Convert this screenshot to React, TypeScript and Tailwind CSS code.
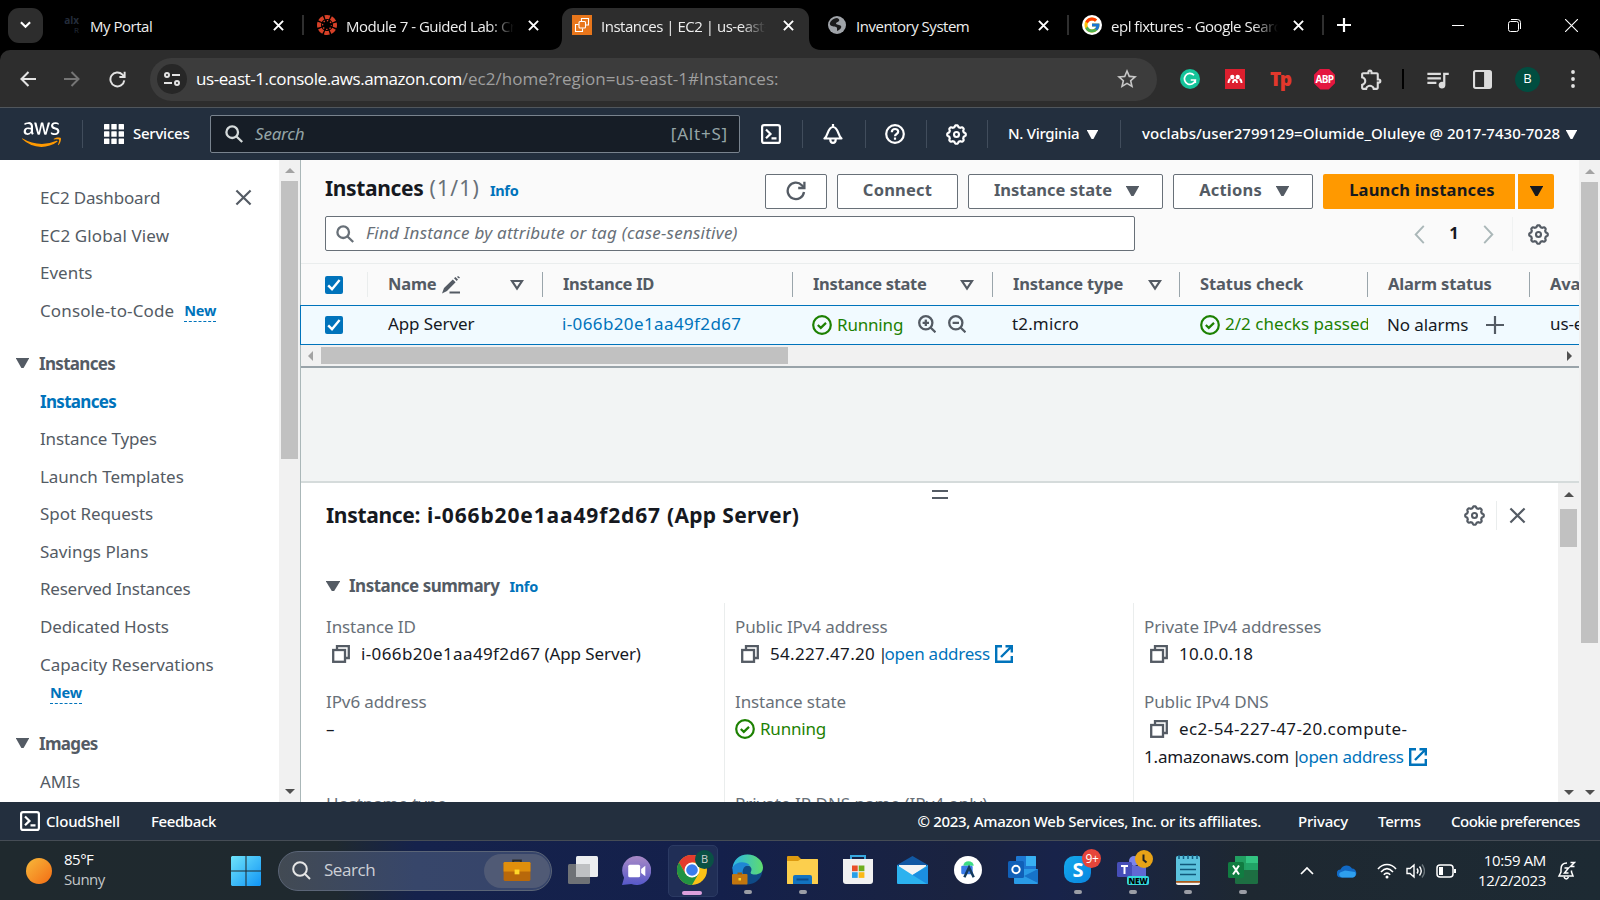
import type { ReactNode } from "react";
import { FaAws } from "react-icons/fa";
import { FcGoogle } from "react-icons/fc";
import { MdOutlineExtension, MdQueueMusic, MdStarBorder } from "react-icons/md";

/* ---------- shared glyphs ---------- */

const gearPath = (() => {
  const pts: string[] = [];
  for (let i = 0; i < 96; i++) {
    const a = (i / 96) * Math.PI * 2;
    const r = 6.4 + 0.65 * Math.max(-1, Math.min(1, 1.5 * Math.cos(8 * a)));
    pts.push(`${(8 + r * Math.cos(a)).toFixed(2)} ${(8 + r * Math.sin(a)).toFixed(2)}`);
  }
  return `M${pts.join("L")}Z`;
})();

const Gear = ({ className = "" }: { className?: string }) => (
  <svg viewBox="0 0 16 16" className={`size-[21px] shrink-0 ${className}`} fill="none" stroke="currentColor">
    <path d={gearPath} strokeWidth="1.7" strokeLinejoin="round" />
    <circle cx="8" cy="8" r="1.9" strokeWidth="1.6" />
  </svg>
);

const Close = ({ className = "" }: { className?: string }) => (
  <svg viewBox="0 0 18 18" className={`shrink-0 ${className}`} fill="none" stroke="currentColor">
    <path d="M1.5 1.5l15 15M16.5 1.5l-15 15" strokeWidth="2.3" />
  </svg>
);

const Caret = ({ className = "" }: { className?: string }) => (
  <svg viewBox="0 0 12 10" preserveAspectRatio="none" className={`shrink-0 ${className}`} fill="currentColor">
    <path d="M0 0h12v.5L7 10H5L0 .5z" />
  </svg>
);

const SortCaret = () => (
  <svg viewBox="0 0 14 12" className="h-[12px] w-[14px] shrink-0" fill="none" stroke="#545b64" strokeWidth="2.2">
    <path d="M2 2h10L7 9.6z" />
  </svg>
);

const Magnifier = ({ className = "" }: { className?: string }) => (
  <svg viewBox="0 0 18 18" className={`size-[18px] shrink-0 ${className}`} fill="none" stroke="currentColor" strokeWidth="2.3">
    <circle cx="7.2" cy="7.2" r="5.8" />
    <path d="M11.5 11.5l5.7 5.5" />
  </svg>
);

const Terminal = ({ className = "" }: { className?: string }) => (
  <svg viewBox="0 0 20 20" className={`size-[20px] shrink-0 ${className}`} fill="none" stroke="currentColor" strokeWidth="2.2">
    <rect x="1.1" y="1.1" width="17.8" height="17.8" rx="2" />
    <path d="M5 5.5l4.5 4.4L5 14.3M10.5 14.4h5" />
  </svg>
);

const Reload = ({ className = "" }: { className?: string }) => (
  <svg viewBox="0 0 20 20" className={`shrink-0 ${className}`} fill="none" stroke="currentColor" strokeWidth="2.3">
    <path d="M18 11a8.2 8.2 0 1 1-2.2-6.8L18 6.4" />
    <path d="M18.4 0.8v6.2h-6.2" />
  </svg>
);

const StatusOk = () => (
  <svg viewBox="0 0 20 20" className="size-[20px] shrink-0" fill="none" stroke="#1d8102" strokeWidth="2.2">
    <circle cx="10" cy="10" r="8.8" />
    <path d="M5.8 10l3 2.9 5.2-5" />
  </svg>
);

const CopyIcon = () => (
  <svg viewBox="0 0 18 18" className="size-[18px] shrink-0" fill="none" stroke="#545b64" strokeWidth="2.3">
    <rect x="1.2" y="5" width="11.8" height="11.8" />
    <path d="M5 5V1.2h11.8V13H13" />
  </svg>
);

const ExternalIcon = () => (
  <svg viewBox="0 0 18 18" className="size-[18px] shrink-0" fill="none" stroke="#0073bb" strokeWidth="2.4">
    <path d="M7 1.2H1.2v15.6h15.6V11" />
    <path d="M10.5 1.2h6.3v6.3M16.5 1.5L6 12" />
  </svg>
);

const Zoomer = ({ plus }: { plus?: boolean }) => (
  <svg viewBox="0 0 18 18" className="size-[18px] shrink-0" fill="none" stroke="#545b64" strokeWidth="2.3">
    <circle cx="7.8" cy="7.8" r="6.6" />
    <path d="M12.5 12.5l5 4.8M4.6 7.8h6.4" />
    {plus && <path d="M7.8 4.6v6.4" />}
  </svg>
);

const Checkbox = () => (
  <span className="flex size-[18px] shrink-0 items-center justify-center rounded-[2px] bg-[#0073bb]">
    <svg viewBox="0 0 14 14" className="size-[14px]" fill="none" stroke="#fff" strokeWidth="2.4">
      <path d="M1.2 7.4l3.8 3.8L12.6 2" />
    </svg>
  </span>
);

const Arrow = ({ dir, dim }: { dir: "up" | "down" | "left" | "right"; dim?: boolean }) => {
  const d = { up: "M0 7L5 2l5 5z", down: "M0 3l5 5 5-5z", left: "M7 0L2 5l5 5z", right: "M3 0l5 5-5 5z" }[dir];
  return (
    <svg viewBox="0 0 10 10" className="size-[10px] shrink-0" fill={dim ? "#a3a3a3" : "#505050"}>
      <path d={d} />
    </svg>
  );
};

/* ---------- browser chrome ---------- */

const TabClose = () => (
  <svg viewBox="0 0 12 12" className="size-[11px] shrink-0" stroke="#fff" strokeWidth="2.1">
    <path d="M1 1l10 10M11 1L1 11" />
  </svg>
);

const tabText = "mt-[2px] overflow-hidden whitespace-nowrap text-[15px] leading-[24px] tracking-[-0.480px] text-[#eeeeee]";
const fade = "[mask-image:linear-gradient(to_right,#000_85%,transparent)]";

function TabStrip() {
  return (
    <div className="flex h-[50px] items-center bg-black font-['Open_Sans',sans-serif]">
      <div className="ml-[8px] flex size-[35px] shrink-0 items-center justify-center rounded-[11px] bg-[#2d2d2d]">
        <svg viewBox="0 0 12 8" className="h-[8px] w-[11px]" fill="none" stroke="#fff" strokeWidth="2.3">
          <path d="M1 1l5 5 5-5" />
        </svg>
      </div>
      <div className="ml-[19px] flex w-[17px] shrink-0 flex-col items-end text-[10px] leading-[9px] font-bold text-[#232c3a]">
        <span>alx</span>
        <span className="text-[8px] font-normal">R</span>
      </div>
      <span className={`ml-[11px] w-[183px] shrink-0 ${tabText}`}>My Portal</span>
      <TabClose />
      <span className="ml-[18px] h-[20px] w-[2px] shrink-0 bg-[#2f2f2f]" />
      <svg viewBox="0 0 20 20" className="ml-[13px] size-[20px] shrink-0" fill="none">
        <circle cx="10" cy="10" r="8" stroke="#d64027" strokeWidth="4" strokeDasharray="4.9 1.383" strokeDashoffset="2.4" />
        <circle cx="10" cy="10" r="4.4" stroke="#d64027" strokeWidth="1.4" strokeDasharray="1.4 2.056" strokeDashoffset="0.7" />
      </svg>
      <span className={`ml-[9px] w-[168px] shrink-0 tracking-[-0.400px] ${tabText} ${fade}`}>Module 7 - Guided Lab: Creating</span>
      <span className="ml-[14px] flex">
        <TabClose />
      </span>
      <div className="ml-[11px] flex h-[50px] w-[271px] shrink-0 items-end">
        <svg viewBox="0 0 12 12" className="size-[12px] shrink-0" fill="#2d2d2d">
          <path d="M12 0v12H0C8 12 12 7 12 0z" />
        </svg>
        <div className="flex h-[42px] w-[247px] shrink-0 items-center rounded-t-[11px] bg-[#2d2d2d] pb-[8px]">
          <svg viewBox="0 0 20 20" className="ml-[10px] size-[20px] shrink-0" fill="none" stroke="#fff" strokeWidth="1.1">
            <rect width="20" height="20" fill="#e8761b" stroke="none" />
            <rect x="7" y="6.5" width="6.5" height="6.5" rx="1" />
            <path d="M9.5 6V3.5h7V10H14M6.5 9.5H3.5v7h7V13.5" />
          </svg>
          <span className={`ml-[9px] w-[165px] shrink-0 ${tabText} ${fade}`}>Instances | EC2 | us-east-1</span>
          <span className="ml-[17px] flex">
            <TabClose />
          </span>
        </div>
        <svg viewBox="0 0 12 12" className="size-[12px] shrink-0" fill="#2d2d2d">
          <path d="M0 0v12h12C4 12 0 7 0 0z" />
        </svg>
      </div>
      <svg viewBox="0 0 18 18" className="ml-[7px] size-[18px] shrink-0">
        <circle cx="9" cy="9" r="9" fill="#a0a4a9" />
        <path d="M9 2c1.500.5 3 1.500 2 3S8 6 8 7.500 12 8.500 13 10s-1 4-4 5c0-2 .5-3.500-1-4S3 10.500 2 8.500 5 2 9 2z" fill="#1b1b1b" />
      </svg>
      <span className={`ml-[10px] w-[182px] shrink-0 ${tabText}`}>Inventory System</span>
      <TabClose />
      <span className="ml-[18px] h-[20px] w-[2px] shrink-0 bg-[#2f2f2f]" />
      <span className="ml-[13px] flex size-[20px] shrink-0 items-center justify-center rounded-full bg-white">
        <FcGoogle className="size-[18px]" />
      </span>
      <span className={`ml-[9px] w-[167px] shrink-0 ${tabText} ${fade}`}>epl fixtures - Google Search</span>
      <span className="ml-[15px] flex">
        <TabClose />
      </span>
      <span className="ml-[18px] h-[20px] w-[2px] shrink-0 bg-[#2f2f2f]" />
      <svg viewBox="0 0 14 14" className="ml-[13px] size-[14px] shrink-0" stroke="#fff" strokeWidth="2.2">
        <path d="M7 0v14M0 7h14" />
      </svg>
      <div className="ml-auto flex items-center gap-[44px] pr-[22px] text-white">
        <span className="h-[1px] w-[12px] bg-white" />
        <svg viewBox="0 0 13 13" className="size-[13px]" fill="none" stroke="#fff" strokeWidth="1">
          <rect x="0.5" y="2.5" width="10" height="10" rx="2" />
          <path d="M3 .5h6.5a3 3 0 0 1 3 3V10" />
        </svg>
        <svg viewBox="0 0 13 13" className="size-[13px]" stroke="#fff" strokeWidth="1.1">
          <path d="M0 0l13 13M13 0L0 13" />
        </svg>
      </div>
    </div>
  );
}

function AddressBar() {
  return (
    <div className="bg-black font-['Open_Sans',sans-serif]">
      <div className="flex h-[57px] items-center rounded-t-[10px] bg-[#2d2d2d] pt-[1px]">
        <svg viewBox="0 0 16 16" className="ml-[20px] size-[16px] shrink-0" fill="none" stroke="#e3e3e3" strokeWidth="2.1">
          <path d="M16 8H2M8.5 1L1.500 8l7 7" />
        </svg>
        <svg viewBox="0 0 16 16" className="ml-[28px] size-[16px] shrink-0" fill="none" stroke="#757575" strokeWidth="2">
          <path d="M0 8h14M7.5 1l7 7-7 7" />
        </svg>
        <Reload className="ml-[29px] size-[17px] text-[#e3e3e3]" />
        <div className="ml-[24px] flex h-[43px] w-[1007px] shrink-0 items-center rounded-full bg-[#3c3c3c]">
          <div className="ml-[7px] flex size-[30px] items-center justify-center rounded-full bg-[#272727]">
            <svg viewBox="0 0 16 14" className="h-[14px] w-[16px]" fill="none" stroke="#e3e3e3" strokeWidth="2">
              <circle cx="3" cy="3" r="2" />
              <path d="M8 3h8M0 11h8" />
              <circle cx="13" cy="11" r="2" />
            </svg>
          </div>
          <span className="ml-[9px] text-[17px] tracking-[-0.420px] whitespace-nowrap text-white">
            us-east-1.console.aws.amazon.com
            <span className="tracking-[0.010px] text-[#9f9f9f]">/ec2/home?region=us-east-1#Instances:</span>
          </span>
          <MdStarBorder className="mr-[18px] ml-auto size-[24px] text-[#c7c7c7]" />
        </div>
        <svg viewBox="0 0 20 20" className="ml-[23px] size-[20px] shrink-0" fill="none" stroke="#fff" strokeWidth="1.7">
          <circle cx="10" cy="10" r="10" fill="#15c39a" stroke="none" />
          <path d="M14 6.2A5.5 5.5 0 1 0 15.300 11h-4.600M15.300 11v3" />
        </svg>
        <svg viewBox="0 0 20 20" className="ml-[25px] size-[20px] shrink-0">
          <rect width="20" height="20" fill="#dc1f2e" />
          <path d="M3.500 14c0-2.500.8-3.500 2-4M16.500 14c0-2.500-.8-3.500-2-4M8 14c0-2 .5-3 2-3s2 1 2 3" stroke="#fff" strokeWidth="1.9" fill="none" />
          <circle cx="7.3" cy="8" r="2.2" fill="#fff" />
          <circle cx="12.7" cy="8" r="2.2" fill="#fff" />
        </svg>
        <span className="ml-[25px] w-[20px] shrink-0 text-[19px] leading-[20px] font-extrabold tracking-[-1.500px] text-[#e2382c]">Tp</span>
        <span className="ml-[24px] flex size-[21px] shrink-0 items-center justify-center bg-[#e4173f] text-[10px] font-bold tracking-[-0.600px] text-white [clip-path:polygon(30%_0,70%_0,100%_30%,100%_70%,70%_100%,30%_100%,0_70%,0_30%)]">
          ABP
        </span>
        <MdOutlineExtension className="ml-[24px] size-[25px] shrink-0 text-[#dcdcdc]" />
        <span className="ml-[18px] h-[20px] w-[2px] shrink-0 bg-black" />
        <MdQueueMusic className="ml-[20px] size-[27px] shrink-0 text-[#dcdcdc]" />
        <svg viewBox="0 0 18 18" className="ml-[22px] size-[19px] shrink-0" fill="none" stroke="#dcdcdc" strokeWidth="2">
          <rect x="1" y="1" width="16" height="16" rx="1.5" />
          <path d="M10.500 1h6.500v16h-6.500z" fill="#dcdcdc" stroke="none" />
        </svg>
        <span className="ml-[23px] flex size-[25px] shrink-0 items-center justify-center rounded-full bg-[#014d40] text-[13px] text-white">B</span>
        <svg viewBox="0 0 4 18" className="ml-[31px] h-[18px] w-[4px] shrink-0" fill="#e3e3e3">
          <circle cx="2" cy="2" r="1.9" />
          <circle cx="2" cy="9" r="1.9" />
          <circle cx="2" cy="16" r="1.9" />
        </svg>
      </div>
    </div>
  );
}

/* ---------- AWS top navigation ---------- */

const NavDivider = ({ className = "" }: { className?: string }) => (
  <span className={`h-[28px] w-[1px] shrink-0 bg-[#414d5c] ${className}`} />
);

function AwsNav() {
  return (
    <div className="flex h-[53px] items-center border-t border-[#50565c] bg-[#232f3e] text-white">
      <svg width="0" height="0" className="absolute">
        <linearGradient id="aws" x1="0" x2="0" y1="0" y2="1">
          <stop offset="0.6" stopColor="#fff" />
          <stop offset="0.6" stopColor="#f90" />
        </linearGradient>
      </svg>
      <FaAws className="ml-[22px] h-[33px] w-[39px] shrink-0" fill="url(#aws)" preserveAspectRatio="none" />
      <NavDivider className="ml-[21px]" />
      <svg viewBox="0 0 20 20" className="ml-[21px] size-[20px] shrink-0" fill="#fff">
        {[0, 7.3, 14.6].map((y) => [0, 7.3, 14.6].map((x) => <rect key={`${x}-${y}`} x={x} y={y} width="5.4" height="5.4" rx=".5" />))}
      </svg>
      <span className="ml-[9px] w-[57px] shrink-0 pb-[1px] text-[15px] font-medium tracking-[-0.250px]">Services</span>
      <div className="ml-[20px] flex h-[38px] w-[530px] shrink-0 items-center rounded-[2px] border border-[#79838e] bg-[#161d26] px-[14px]">
        <Magnifier className="text-[#d5dbdb]" />
        <span className="ml-[12px] text-[17px] tracking-[-0.200px] text-[#95a5a6] italic">Search</span>
        <span className="-mr-[3px] ml-auto text-[17px] tracking-[0.800px] text-[#95a5a6]">[Alt+S]</span>
      </div>
      <Terminal className="ml-[21px]" />
      <NavDivider className="ml-[21px]" />
      <svg viewBox="0 0 20 20" className="ml-[20px] size-[20px] shrink-0" fill="none" stroke="#fff" strokeWidth="2.2" strokeLinejoin="round">
        <path d="M1.500 14.500h17C15 12.500 15.500 3 10 3S5 12.500 1.500 14.500zM10 0v3M7.300 15.500c0 4.500 5.400 4.500 5.400 0" />
      </svg>
      <NavDivider className="ml-[22px]" />
      <svg viewBox="0 0 20 20" className="ml-[19px] size-[20px] shrink-0" fill="none" stroke="#fff" strokeWidth="2.2">
        <circle cx="10" cy="10" r="8.8" />
        <path d="M6.800 8.200C6.800 4 13.200 4 13.200 7.800c0 2.400-3.200 2-3.200 4.400M10 13.600v2.200" />
      </svg>
      <NavDivider className="ml-[21px]" />
      <Gear className="ml-[19px]" />
      <NavDivider className="ml-[20px]" />
      <span className="ml-[20px] w-[72px] shrink-0 pb-[1px] text-[15px] font-medium tracking-[-0.300px] whitespace-nowrap">N. Virginia</span>
      <Caret className="ml-[7px] h-[9px] w-[11px]" />
      <NavDivider className="ml-[22px]" />
      <span className="ml-[21px] w-[418px] shrink-0 pb-[1px] text-[15px] font-medium tracking-[0.050px] whitespace-nowrap">
        voclabs/user2799129=Olumide_Oluleye @ 2017-7430-7028
      </span>
      <Caret className="ml-[6px] h-[9px] w-[11px]" />
    </div>
  );
}

/* ---------- sidebar ---------- */

const NewTag = ({ className = "" }: { className?: string }) => (
  <span className={`h-[23px] border-b border-dashed border-[#0073bb] text-[14.500px] leading-[22px] font-bold tracking-[-0.200px] text-[#0073bb] ${className}`}>New</span>
);

const Item = ({ children, className = "" }: { children: ReactNode; className?: string }) => (
  <div className={`flex h-[37.550px] shrink-0 items-center pl-[40px] whitespace-nowrap ${className}`}>{children}</div>
);

const Section = ({ children }: { children: ReactNode }) => (
  <div className="flex h-[37.500px] shrink-0 items-center pb-[1px] pl-[16px] font-bold tracking-[-0.680px]">
    <Caret className="mr-[10px] h-[10px] w-[13px]" />
    {children}
  </div>
);

function Sidebar() {
  return (
    <div className="flex h-[642px] w-[301px] shrink-0 border-r border-[#aab7b8] bg-white">
      <div className="flex w-[279px] shrink-0 flex-col overflow-hidden pt-[19px] text-[17px] text-[#545b64]">
        <div className="flex items-center">
          <Item className="tracking-[-0.160px]">EC2 Dashboard</Item>
          <Close className="mr-[27px] ml-auto size-[17px]" />
        </div>
        <Item className="tracking-[0.120px]">EC2 Global View</Item>
        <Item>Events</Item>
        <Item className="tracking-[0.120px]">
          Console-to-Code
          <NewTag className="ml-[10px]" />
        </Item>
        <div className="h-[16px] shrink-0" />
        <Section>Instances</Section>
        <Item>
          <span className="font-bold tracking-[-0.680px] text-[#0073bb]">Instances</span>
        </Item>
        <Item className="tracking-[-0.140px]">Instance Types</Item>
        <Item className="tracking-[-0.050px]">Launch Templates</Item>
        <Item className="tracking-[-0.050px]">Spot Requests</Item>
        <Item>Savings Plans</Item>
        <Item className="tracking-[-0.230px]">Reserved Instances</Item>
        <Item className="tracking-[-0.110px]">Dedicated Hosts</Item>
        <Item className="tracking-[-0.050px]">Capacity Reservations</Item>
        <div className="flex h-[22px] shrink-0 pl-[50px]">
          <NewTag className="-mt-[2px]" />
        </div>
        <div className="h-[20px] shrink-0" />
        <Section>Images</Section>
        <Item>AMIs</Item>
      </div>
      <div className="flex w-[21px] flex-col items-center bg-[#f1f1f1] pt-[6px] pb-[6px]">
        <Arrow dir="up" dim />
        <div className="mt-[5px] h-[278px] w-[17px] bg-[#c1c1c1]" />
        <span className="mt-auto flex">
          <Arrow dir="down" />
        </span>
      </div>
    </div>
  );
}

/* ---------- instances table ---------- */

const Btn = ({ className, children }: { className: string; children: ReactNode }) => (
  <div className={`flex h-[35px] shrink-0 items-center justify-center rounded-[2px] border border-[#687078] bg-white pb-[1px] ${className}`}>{children}</div>
);

const Th = ({ className, children, first }: { className: string; children?: ReactNode; first?: boolean }) => (
  <div className={`flex h-[25px] shrink-0 items-center border-r whitespace-nowrap ${first ? "border-[#eaeded]" : "border-[#9aa5ab]"} ${className}`}>{children}</div>
);

const Td = ({ className, children }: { className: string; children?: ReactNode }) => (
  <div className={`flex shrink-0 items-center overflow-hidden whitespace-nowrap ${className}`}>{children}</div>
);

function InstancesTable() {
  return (
    <div className="flex flex-col bg-[#fafafa]">
      <div className="flex h-[56px] items-center pt-[6px] pl-[24px] text-[16.500px] font-bold tracking-[0.200px] text-[#545b64]">
        <div className="flex w-[440px] shrink-0 items-baseline pb-[4px]">
          <span className="text-[21px] tracking-[-0.350px] text-[#16191f]">Instances</span>
          <span className="ml-[6px] text-[21px] font-normal tracking-[1.200px] text-[#687078]">(1/1)</span>
          <span className="ml-[10px] text-[14.500px] tracking-[-0.300px] text-[#0073bb]">Info</span>
        </div>
        <Btn className="w-[62px]">
          <Reload className="size-[20px]" />
        </Btn>
        <Btn className="ml-[10px] w-[121px]">Connect</Btn>
        <Btn className="ml-[10px] w-[195px] pl-[2px] tracking-[0px]">
          Instance state
          <Caret className="ml-[14px] h-[10px] w-[13px]" />
        </Btn>
        <Btn className="ml-[10px] w-[140px] pl-[2px]">
          Actions
          <Caret className="ml-[14px] h-[10px] w-[13px]" />
        </Btn>
        <div className="ml-[10px] flex h-[35px] w-[192px] shrink-0 items-center justify-center rounded-l-[2px] bg-[#ff9900] pb-[1px] pl-[6px] text-[#16191f]">Launch instances</div>
        <div className="ml-[3px] flex h-[35px] w-[36px] shrink-0 items-center justify-center rounded-r-[2px] bg-[#ff9900] pb-[1px] text-[#16191f]">
          <Caret className="h-[10px] w-[13px]" />
        </div>
      </div>
      <div className="flex h-[47px] items-start pl-[24px]">
        <div className="flex h-[35px] w-[810px] shrink-0 items-center rounded-[2px] border border-[#687078] bg-white pl-[10px]">
          <Magnifier className="text-[#687078]" />
          <span className="ml-[12px] pb-[1px] text-[17px] tracking-[0.240px] text-[#687078] italic">Find Instance by attribute or tag (case-sensitive)</span>
        </div>
        <div className="flex h-[36px] items-center">
          <svg viewBox="0 0 11 20" className="ml-[279px] h-[19px] w-[11px]" fill="none" stroke="#aab7b8" strokeWidth="2">
            <path d="M10 1L1.500 10 10 19" />
          </svg>
          <span className="w-[58px] pb-[1px] text-center text-[16.500px] font-bold text-[#16191f]">1</span>
          <svg viewBox="0 0 11 20" className="h-[19px] w-[11px]" fill="none" stroke="#aab7b8" strokeWidth="2">
            <path d="M1 1l8.500 9L1 19" />
          </svg>
          <span className="ml-[18px] h-[34px] w-[1px] bg-[#f0f2f2]" />
          <Gear className="ml-[15px] text-[#545b64]" />
        </div>
      </div>
      <div className="flex h-[42px] items-center overflow-hidden border-t border-[#eaeded] pl-[24px] text-[16.500px] font-bold tracking-[-0.200px] text-[#545b64]">
        <Th className="w-[43px]" first>
          <Checkbox />
        </Th>
        <Th className="w-[175px] pl-[20px]">
          <span className="w-[54px] pb-[1px]">Name</span>
          <svg viewBox="0 0 18 18" className="size-[18px]" fill="#545b64">
            <path d="M0 17.500l2-5.500 8.800-8.600 2.800 2.800L5 15zM12 2.200L13.400 1 16 3.500l-1.300 1.400zM16 0l2 1.500-1 1-2-1.500zM7.500 15.500H18v2H7.500z" />
          </svg>
          <span className="ml-[50px]">
            <SortCaret />
          </span>
        </Th>
        <Th className="w-[250px] pl-[20px] tracking-[-0.300px]">Instance ID</Th>
        <Th className="w-[200px] pl-[20px] tracking-[-0.340px]">
          <span className="w-[147px]">Instance state</span>
          <SortCaret />
        </Th>
        <Th className="w-[187px] pl-[20px]">
          <span className="w-[135px]">Instance type</span>
          <SortCaret />
        </Th>
        <Th className="w-[188px] pl-[20px] tracking-[-0.100px]">Status check</Th>
        <Th className="w-[162px] pl-[20px] tracking-[-0.150px]">Alarm status</Th>
        <div className="pl-[20px] whitespace-nowrap">Ava</div>
      </div>
      <div className="-ml-px flex h-[40px] items-center overflow-hidden border-y border-l border-[#0073bb] bg-[#f1faff] pl-[24px] text-[17px] tracking-[-0.100px] text-[#16191f]">
        <Td className="w-[43px]">
          <Checkbox />
        </Td>
        <Td className="w-[175px] pb-[2px] pl-[20px]">App Server</Td>
        <Td className="w-[250px] pb-[2px] pl-[19px]">
          <span className="tracking-[0.380px] text-[#0073bb]">i-066b20e1aa49f2d67</span>
        </Td>
        <Td className="w-[200px] pl-[19px]">
          <StatusOk />
          <span className="ml-[5px] w-[81px] tracking-[-0.180px] text-[#1d8102]">Running</span>
          <span className="pb-[2px]">
            <Zoomer plus />
          </span>
          <span className="ml-[12px] pb-[2px]">
            <Zoomer />
          </span>
        </Td>
        <Td className="w-[187px] pb-[2px] pl-[19px]">
          <span className="tracking-[0.150px]">t2.micro</span>
        </Td>
        <Td className="w-[188px] pl-[20px]">
          <StatusOk />
          <span className="ml-[5px] pb-[2px] tracking-[0.030px] text-[#1d8102]">2/2 checks passed</span>
        </Td>
        <Td className="w-[162px] pl-[19px]">
          <span className="w-[99px]">No alarms</span>
          <svg viewBox="0 0 18 18" className="size-[18px]" stroke="#545b64" strokeWidth="2.2">
            <path d="M9 0v18M0 9h18" />
          </svg>
        </Td>
        <div className="pb-[2px] pl-[20px] whitespace-nowrap">us-east-1a</div>
      </div>
      <div className="flex h-[23px] items-center border-b-2 border-[#99a3a9] bg-[#f1f1f1] pl-[5px]">
        <Arrow dir="left" dim />
        <div className="ml-[5px] h-[17px] w-[467px] bg-[#c1c1c1]" />
        <span className="mr-[5px] ml-auto">
          <Arrow dir="right" />
        </span>
      </div>
    </div>
  );
}

/* ---------- split panel ---------- */

const label = "h-[27px] leading-[27px] text-[#687078] tracking-[-0.100px] whitespace-nowrap";
const value = "flex h-[28px] items-center whitespace-nowrap";

const OpenAddress = () => (
  <>
    <span className="tracking-[-3px]">|</span>
    <span className="mr-[5px] tracking-[-0.240px] text-[#0073bb]">open address</span>
    <ExternalIcon />
  </>
);

const Copy = () => (
  <span className="mr-[11px] ml-[6px]">
    <CopyIcon />
  </span>
);

function SplitPanel() {
  return (
    <div className="flex h-[321px] overflow-hidden border-t-2 border-[#d5dbdb] bg-white">
      <div className="flex w-[1257px] shrink-0 flex-col pl-[25px]">
        <div className="flex h-[16px] shrink-0 items-end pl-[606px]">
          <span className="h-[9px] w-[16px] border-y-2 border-[#545b64]" />
        </div>
        <div className="flex h-[33px] shrink-0 items-center">
          <span className="flex text-[21px] font-bold whitespace-nowrap text-[#16191f]">
            <span className="tracking-[-0.320px]">Instance:</span>
            <span className="ml-[7px] tracking-[0.860px]">i-066b20e1aa49f2d67</span>
            <span className="ml-[6px] tracking-[0.330px]">(App Server)</span>
          </span>
          <Gear className="ml-auto text-[#545b64]" />
          <span className="ml-[11px] h-[29px] w-[1px] bg-[#eaeded]" />
          <Close className="mr-[32px] ml-[12px] size-[17px] text-[#545b64]" />
        </div>
        <div className="mt-[42px] flex h-[24px] shrink-0 items-center text-[#545b64]">
          <Caret className="h-[10px] w-[14px]" />
          <span className="ml-[9px] text-[17px] font-bold tracking-[-0.500px]">Instance summary</span>
          <span className="ml-[10px] pt-[1px] text-[14.500px] font-bold tracking-[-0.300px] text-[#0073bb]">Info</span>
        </div>
        <div className="mt-[5px] flex text-[17px] tracking-[-0.100px] text-[#16191f]">
          <div className="w-[398px] shrink-0 pt-[10px]">
            <div className={label}>Instance ID</div>
            <div className={value}>
              <Copy />
              <span className="mr-[4px] tracking-[0.380px]">i-066b20e1aa49f2d67</span>
              <span>(App Server)</span>
            </div>
            <div className={`mt-[20px] ${label}`}>IPv6 address</div>
            <div className={value}>–</div>
            <div className={`mt-[47px] ${label}`}>Hostname type</div>
          </div>
          <div className="w-[409px] shrink-0 border-l border-[#eaeded] pt-[10px] pl-[10px]">
            <div className={label}>Public IPv4 address</div>
            <div className={value}>
              <Copy />
              <span className="mr-[3px] tracking-[0.330px]">54.227.47.20</span>
              <OpenAddress />
            </div>
            <div className={`mt-[20px] ${label}`}>Instance state</div>
            <div className={value}>
              <StatusOk />
              <span className="ml-[5px] tracking-[-0.200px] text-[#1d8102]">Running</span>
            </div>
            <div className={`mt-[47px] tracking-[0px] ${label}`}>Private IP DNS name (IPv4 only)</div>
          </div>
          <div className="shrink-0 border-l border-[#eaeded] pt-[10px] pl-[10px]">
            <div className={label}>Private IPv4 addresses</div>
            <div className={value}>
              <Copy />
              <span className="tracking-[0.250px]">10.0.0.18</span>
            </div>
            <div className={`mt-[20px] ${label}`}>Public IPv4 DNS</div>
            <div className={value}>
              <Copy />
              <span className="tracking-[0.420px]">ec2-54-227-47-20.compute-</span>
            </div>
            <div className={value}>
              <span className="mr-[3px] tracking-[-0.200px]">1.amazonaws.com</span>
              <OpenAddress />
            </div>
          </div>
        </div>
      </div>
      <div className="flex w-[21px] flex-col items-center bg-[#f1f1f1] pt-[7px] pb-[5px]">
        <Arrow dir="up" />
        <div className="mt-[9px] h-[38px] w-[17px] bg-[#c1c1c1]" />
        <span className="mt-auto flex">
          <Arrow dir="down" />
        </span>
      </div>
    </div>
  );
}

/* ---------- footer and taskbar ---------- */

function Footer() {
  return (
    <div className="flex h-[39px] shrink-0 items-center border-b border-[#454c55] bg-[#232f3e] text-[15px] font-medium tracking-[-0.200px] whitespace-nowrap text-white">
      <Terminal className="ml-[20px]" />
      <span className="ml-[6px] w-[105px]">CloudShell</span>
      <span className="tracking-[-0.400px]">Feedback</span>
      <span className="mr-[37px] ml-auto tracking-[-0.300px]">© 2023, Amazon Web Services, Inc. or its affiliates.</span>
      <span className="w-[80px]">Privacy</span>
      <span className="w-[73px]">Terms</span>
      <span className="w-[129px] tracking-[-0.520px]">Cookie preferences</span>
      <span className="w-[20px]" />
    </div>
  );
}

const TaskbarApp = ({ className = "", children, dot }: { className?: string; children: ReactNode; dot?: boolean }) => (
  <div className={`flex h-[59px] w-[55.050px] shrink-0 flex-col items-center ${className}`}>
    <div className="flex h-[48px] shrink-0 items-end justify-center pt-[8px]">{children}</div>
    {dot && <span className="mt-[1px] h-[4px] w-[8px] rounded-full bg-[#9b9ea6]" />}
  </div>
);

function Taskbar() {
  return (
    <div className="flex h-[59px] shrink-0 items-center bg-[linear-gradient(to_right,#1f292e_0%,#1f292f_21%,#15224c_26%,#14204b_45%,#1a2340_60%,#18234a_66%,#1e2831_78%,#1d2a33_100%)] font-['Open_Sans',sans-serif]">
      <span className="ml-[26px] size-[26px] shrink-0 rounded-full bg-linear-to-br from-[#f6b93a] to-[#f26a12]" />
      <div className="ml-[12px] flex w-[167px] shrink-0 flex-col pb-[3px] text-[15px] leading-[20px] tracking-[-0.500px] text-white">
        <span>85°F</span>
        <span className="text-[#c3c7c9]">Sunny</span>
      </div>
      <svg viewBox="0 0 29 29" className="size-[30px] shrink-0">
        <linearGradient id="win" x1="0" y1="0" x2="1" y2="1" gradientUnits="objectBoundingBox">
          <stop offset="0" stopColor="#6fe4fb" />
          <stop offset="1" stopColor="#1094f5" />
        </linearGradient>
        <path fill="url(#win)" d="M1 0h13v14H0V1zM15 0h13l1 1v13H15zM0 15h14v14H1l-1-1zM15 15h14v13l-1 1H15z" />
      </svg>
      <div className="ml-[17px] flex h-[40px] w-[274px] shrink-0 items-center rounded-full border border-[#5b6577] bg-linear-to-r from-[#424a53] via-[#37466a] to-[#36446a]">
        <svg viewBox="0 0 19 19" className="ml-[13px] size-[19px]" fill="none" stroke="#e6e6e6" strokeWidth="2">
          <circle cx="8" cy="8" r="6.8" />
          <path d="M13 13l5 5" />
        </svg>
        <span className="ml-[13px] pb-[1px] text-[17px] tracking-[-0.450px] text-[#cdd0d6]">Search</span>
        <div className="mr-[1px] ml-auto flex h-[34px] w-[66px] items-center justify-center rounded-full bg-[#505a75]">
          <svg viewBox="0 0 28 24" className="h-[23px] w-[28px]">
            <path d="M10 5V1.500h8V5" fill="none" stroke="#2a2a2a" strokeWidth="2" />
            <rect y="3" width="28" height="20" rx="1.5" fill="#b8680a" />
            <path d="M0 4.500Q0 3 1.500 3h25Q28 3 28 4.500V13H0z" fill="#e08f0c" />
            <rect x="11.5" y="11" width="5" height="5" fill="#ffd829" />
          </svg>
        </div>
      </div>
      <TaskbarApp className="ml-[3px]">
        <svg viewBox="0 0 30 28" className="mb-[5px] h-[28px] w-[30px]">
          <rect x="8" width="22" height="21" rx="1.5" fill="#eceef0" />
          <rect y="8" width="22" height="20" rx="1.5" fill="#6f7276" />
          <path d="M8 8h14v13H8z" fill="#bfc1c3" />
        </svg>
      </TaskbarApp>
      <TaskbarApp className="-ml-[1px]">
        <svg viewBox="0 0 28 28" className="mb-[4px] size-[29px]">
          <linearGradient id="meet" x1="0" y1="0" x2="0" y2="1">
            <stop offset="0" stopColor="#a889c6" />
            <stop offset="1" stopColor="#5658c9" />
          </linearGradient>
          <path d="M14 0a14 14 0 1 1-5 27L0 28l2-7A14 14 0 0 1 14 0z" fill="url(#meet)" />
          <rect x="6" y="8.5" width="11.5" height="12" rx="1.5" fill="#fff" />
          <path d="M18.500 12.500l4-3v10l-4-3z" fill="#fff" />
        </svg>
      </TaskbarApp>
      <div className="relative ml-[4px] flex h-[52px] w-[50px] shrink-0 flex-col items-center rounded-[5px] border border-[#2b3a63] bg-[#202e56] pr-[2px]">
        <svg viewBox="0 0 48 48" className="mt-[9px] size-[30px]">
          <circle cx="24" cy="24" r="24" fill="#fbc116" />
          <path d="M24 12h20.800A24 24 0 0 0 3.200 12L13.600 30z" fill="#e33b2e" />
          <path d="M3.200 12A24 24 0 0 0 24 48l10.400-18-10.400 6-10.400-6z" fill="#229342" />
          <circle cx="24" cy="24" r="12" fill="#fff" />
          <circle cx="24" cy="24" r="9.3" fill="#3b7ded" />
        </svg>
        <span className="absolute top-[4px] right-[3px] flex size-[19px] items-center justify-center rounded-full bg-[#0a5145] text-[11px] text-[#d0d0d0]">B</span>
        <span className="mt-[6px] h-[4px] w-[20px] shrink-0 rounded-full bg-[#dda0dd]" />
      </div>
      <TaskbarApp className="ml-[2px]" dot>
        <svg viewBox="0 0 31 30" className="mb-[4px] h-[31px] w-[31px]">
          <linearGradient id="edge" x1="0" y1="0" x2="1" y2="0">
            <stop offset="0" stopColor="#2bb5e6" />
            <stop offset="1" stopColor="#5fdc6e" />
          </linearGradient>
          <circle cx="15.5" cy="15" r="15" fill="#0f4a86" />
          <path d="M.5 14C1 6 7 0 15.500 0S31 6 31 13c0 5-4 7-8 7s-5-1-4-3c1.500-3-.5-6-4-6-6 0-8 5-14.500 3z" fill="url(#edge)" />
          <path d="M.5 13C5 6 14 7 18 11c-7-1-9 6-6 12L1 20z" fill="#1f86d4" />
          <rect x="0" y="19.5" width="15.5" height="10.5" rx="1" fill="#c2760f" />
          <rect x="5.5" y="18" width="4.5" height="2" fill="#9b5b0a" />
          <rect x="6.5" y="23.5" width="2.5" height="2.5" fill="#ffd829" />
        </svg>
      </TaskbarApp>
      <TaskbarApp dot>
        <svg viewBox="0 0 31 28" className="mb-[5px] h-[28px] w-[31px]">
          <path d="M0 1q0-1 1-1h10l3 3h16q1 0 1 1v24H0z" fill="#dd9a10" />
          <path d="M0 5h11l3-2h16q1 0 1 1v23q0 1-1 1H1q-1 0-1-1z" fill="#fccf4d" />
          <path d="M6 28v-7q0-2 2-2h15q2 0 2 2v7z" fill="#1273c0" />
          <path d="M9.500 23.500h12" stroke="#0a4c8c" strokeWidth="2" />
        </svg>
      </TaskbarApp>
      <TaskbarApp>
        <svg viewBox="0 0 30 30" className="mb-[4px] size-[30px]">
          <path d="M8 5V1h14v4" fill="none" stroke="#38a8de" strokeWidth="2" />
          <path d="M0 4h30v22q0 3-3 3H3q-3 0-3-3z" fill="#f1f1f1" />
          <path d="M9 10.500h5.700v5.700H9z" fill="#e8502a" />
          <path d="M15.700 10.500h5.700v5.700h-5.700z" fill="#6fae1f" />
          <path d="M9 17.200h5.700v5.700H9z" fill="#2aa0e8" />
          <path d="M15.700 17.200h5.700v5.700h-5.700z" fill="#fbb916" />
        </svg>
      </TaskbarApp>
      <TaskbarApp>
        <svg viewBox="0 0 31 28" className="mb-[5px] h-[28px] w-[31px]">
          <path d="M0 9L15.500 0 31 9v4H0z" fill="#1158a3" />
          <path d="M2 9h27v8L15.500 20 2 17z" fill="#f4f4f4" />
          <path d="M0 9l15.500 10L31 9v18q0 1-1 1H1q-1 0-1-1z" fill="#2cb2ef" />
          <path d="M31 10v17q0 1-1 1L15.500 19z" fill="#1b8fe0" />
        </svg>
      </TaskbarApp>
      <TaskbarApp>
        <svg viewBox="0 0 27 27" className="mb-[5px] size-[28px]">
          <circle cx="13.5" cy="13.5" r="13.5" fill="#fff" />
          <path d="M9 9.500a5 4.500 0 0 1 10 0z" fill="#3ddc84" />
          <rect x="7" y="9.5" width="11" height="8" rx="1" fill="#3a7be8" />
          <path d="M10 20.500L14.500 11l4.500 9.500" fill="none" stroke="#143a5c" strokeWidth="2.4" />
        </svg>
      </TaskbarApp>
      <TaskbarApp>
        <svg viewBox="0 0 30 28" className="mb-[5px] h-[28px] w-[30px]">
          <rect x="8" width="20" height="20" rx="1" fill="#1d77d2" />
          <path d="M18 0h9q1 0 1 1v9H18z" fill="#38b0f2" />
          <path d="M6 13h24v14q0 1-1 1H7q-1 0-1-1z" fill="#2a9be6" />
          <path d="M30 13v14L16 20z" fill="#1673c9" />
          <rect y="5" width="16" height="17" rx="1.5" fill="#1060b8" />
          <circle cx="8" cy="13.5" r="3.7" fill="none" stroke="#fff" strokeWidth="2" />
        </svg>
      </TaskbarApp>
      <TaskbarApp dot>
        <div className="relative mb-[6px] flex size-[27px] items-center justify-center rounded-[10px] bg-linear-to-br from-[#15a9ec] to-[#0b86e0] text-[20px] font-bold text-white">
          S
          <span className="absolute -top-[7px] -right-[10px] flex size-[19px] items-center justify-center rounded-full bg-[#e6453a] text-[12px] font-normal tracking-[-0.500px]">9+</span>
        </div>
      </TaskbarApp>
      <TaskbarApp dot>
        <div className="relative mb-[5px] h-[28px] w-[31px]">
          <svg viewBox="0 0 31 28" className="h-[28px] w-[31px]">
            <circle cx="17" cy="5" r="5" fill="#7b83eb" />
            <path d="M9 10h20v10q0 8-9 8-7 0-11-8z" fill="#6168d3" />
            <rect y="6" width="15" height="15" rx="1.5" fill="#464eb8" />
            <path d="M4 10h7M7.500 10v8" stroke="#fff" strokeWidth="2" />
          </svg>
          <span className="absolute -top-[6px] left-[18px] size-[18px] rounded-full bg-[#e8a317]">
            <svg viewBox="0 0 18 18" fill="none" stroke="#222" strokeWidth="2">
              <path d="M8.500 4.500V10l3 2.500" />
            </svg>
          </span>
          <span className="absolute top-[20px] left-[10px] rounded-[2px] bg-[#35d9dc] px-[1px] text-[8px] leading-[9px] font-extrabold text-black">NEW</span>
        </div>
      </TaskbarApp>
      <TaskbarApp dot>
        <svg viewBox="0 0 24 30" className="mb-[4px] h-[30px] w-[24px]">
          <rect y="1" width="24" height="28" rx="1.5" fill="#5cc3de" />
          <path d="M0 26h24v2q0 2-2 2H2q-2 0-2-2z" fill="#f3f3f3" />
          <path d="M0 26h24v1.800H0z" fill="#a85a1c" />
          <path d="M3 0v4M7.500 0v4M12 0v4M16.500 0v4M21 0v4" stroke="#0f5b80" strokeWidth="1.5" />
          <path d="M4 9.500h16M4 14.500h16M4 19.500h16" stroke="#11587a" strokeWidth="1.7" />
        </svg>
      </TaskbarApp>
      <TaskbarApp dot>
        <svg viewBox="0 0 30 28" className="mb-[5px] h-[28px] w-[30px]">
          <rect x="7" width="23" height="28" rx="1.5" fill="#1d6f42" />
          <path d="M7 0h11v14H7z" fill="#219f61" />
          <path d="M18 0h11q1 0 1 1v6H18z" fill="#33c481" />
          <path d="M18 7h12v7H18z" fill="#21a366" />
          <rect y="6" width="16" height="16" rx="1.5" fill="#107c41" />
          <path d="M5 9.500l6 9M11 9.500l-6 9" stroke="#fff" strokeWidth="2" />
        </svg>
      </TaskbarApp>
      <div className="ml-auto flex shrink-0 items-center pr-[24px]">
        <svg viewBox="0 0 14 9" className="h-[9px] w-[14px]" fill="none" stroke="#fff" strokeWidth="1.7">
          <path d="M1 8l6-6 6 6" />
        </svg>
        <svg viewBox="0 0 20 14" className="ml-[23px] h-[14px] w-[20px]">
          <path d="M4 13.500a4 4 0 0 1-.5-8A6.500 6.500 0 0 1 15 4.500a4.600 4.600 0 0 1 1 9z" fill="#1169c4" />
          <path d="M5 13.500a3 3 0 0 1-2-5l5-2 10 1.500a3.500 3.500 0 0 1-2 5.500z" fill="#2ea0ee" />
        </svg>
        <svg viewBox="0 0 20 16" className="ml-[20px] h-[16px] w-[20px]" fill="none" stroke="#fff" strokeWidth="1.6">
          <path d="M1 6c5-6 13-6 18 0M4 9c4-4.500 8-4.500 12 0M6.800 11.800c2-2.300 4.400-2.300 6.400 0" />
          <circle cx="10" cy="14" r="1.5" fill="#fff" stroke="none" />
        </svg>
        <svg viewBox="0 0 19 16" className="ml-[9px] h-[16px] w-[19px]" fill="none" stroke="#fff" strokeWidth="1.4">
          <path d="M1 5.500h3L8 2v12l-4-3.500H1zM11 5.500q2 2.500 0 5M13.500 3.500q3.500 4.500 0 9" />
          <path d="M16 1.500q5 6.500 0 13" stroke="#6a747a" />
        </svg>
        <svg viewBox="0 0 20 14" className="ml-[11px] h-[14px] w-[20px]" fill="none" stroke="#fff" strokeWidth="1.5">
          <rect x="1" y="1" width="16" height="12" rx="3" />
          <path d="M19 5v4" strokeWidth="2" />
          <rect x="3" y="3" width="4" height="8" fill="#fff" stroke="none" />
        </svg>
        <div className="flex w-[90px] flex-col items-end pb-[2px] text-[15px] leading-[20px] tracking-[-0.350px] text-white">
          <span>10:59 AM</span>
          <span>12/2/2023</span>
        </div>
        <svg viewBox="0 0 19 19" className="ml-[11px] size-[19px]" fill="none" stroke="#fff" strokeWidth="1.5">
          <path d="M10 2C5 2 4 5 4 8v3l-2 4h14l-1.500-4V9.500M7 16c1 2.500 3.500 2.500 4.500 0M7.500 7h4l-4 5h4M13.500 1.500h4l-4 4h4" />
        </svg>
      </div>
    </div>
  );
}

export default function App() {
  return (
    <div className="flex h-[900px] w-[1600px] flex-col overflow-hidden bg-white font-['Noto_Sans',sans-serif]">
      <TabStrip />
      <AddressBar />
      <AwsNav />
      <div className="flex h-[642px] overflow-hidden">
        <Sidebar />
        <div className="flex w-[1278px] shrink-0 flex-col bg-[#f2f4f4]">
          <InstancesTable />
          <div className="flex-1" />
          <SplitPanel />
        </div>
        <div className="flex w-[21px] flex-col items-center bg-[#f1f1f1] pt-[7px] pb-[5px]">
          <Arrow dir="up" dim />
          <div className="mt-[5px] h-[461px] w-[17px] bg-[#c1c1c1]" />
          <span className="mt-auto flex">
            <Arrow dir="down" />
          </span>
        </div>
      </div>
      <Footer />
      <Taskbar />
    </div>
  );
}
